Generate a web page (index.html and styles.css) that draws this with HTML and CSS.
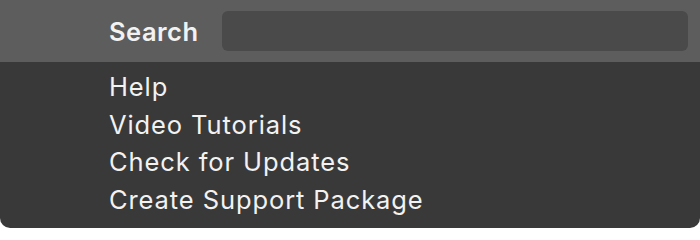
FILE: index.html
```html
<!DOCTYPE html>
<html>
<head>
<meta charset="utf-8">
<link rel="stylesheet" href="styles.css">
</head>
<body>
<div class="panel">
  <div class="header">
    <span class="label">Search</span>
    <div class="field"></div>
  </div>
  <ul class="menu">
    <li>Help</li>
    <li>Video Tutorials</li>
    <li>Check for Updates</li>
    <li>Create Support Package</li>
  </ul>
</div>
</body>
</html>
```
FILE: styles.css
```css
html, body {
  margin: 0;
  padding: 0;
  background: #ffffff;
}
.panel {
  width: 700px;
  height: 228px;
  background: #393939;
  border-radius: 0 0 10px 10px;
  overflow: hidden;
  font-family: Inter, "Liberation Sans", sans-serif;
  color: #f2f2f2;
  letter-spacing: 0.9px;
}
.header {
  height: 62px;
  background: #5d5d5d;
  display: flex;
  align-items: center;
  padding-left: 109px;
  padding-right: 12px;
  box-sizing: border-box;
}
.label {
  font-weight: 600;
  font-size: 25.5px;
  letter-spacing: 0.5px;
  width: 113px;
  flex: none;
}
.field {
  flex: 1;
  height: 40px;
  background: #4a4a4a;
  border-radius: 6px;
}
.menu {
  list-style: none;
  margin: 0;
  padding: 6px 0 0 109px;
  font-size: 25.5px;
  line-height: 37.5px;
}
```
